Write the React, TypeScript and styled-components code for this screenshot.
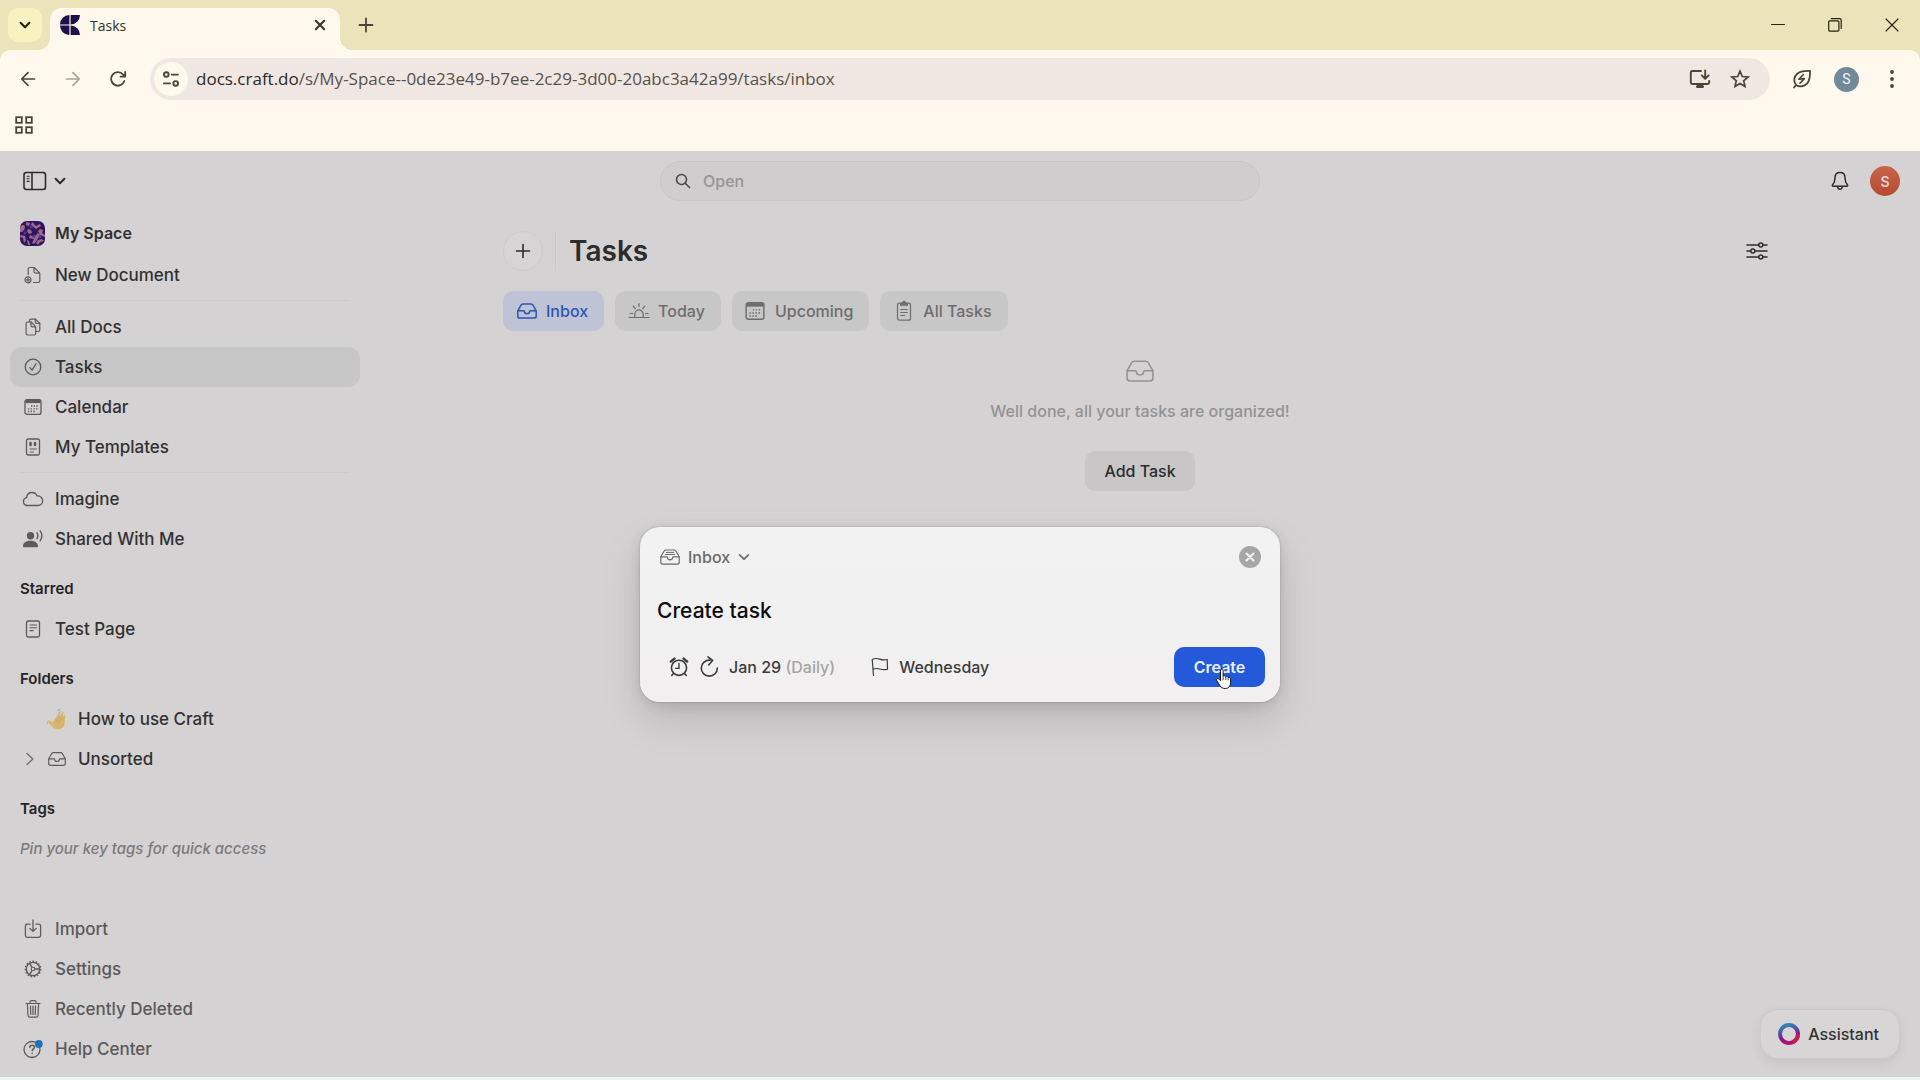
import React from "react";
import styled, { createGlobalStyle } from "styled-components";

const ui = `Inter, "Liberation Sans", sans-serif`;
const chromeFont = `"Open Sans", "Noto Sans", sans-serif`;

const Global = createGlobalStyle`
  * { box-sizing: border-box; }
  html, body { margin: 0; padding: 0; }
  body { font-family: ${ui}; background: #edf3f1; }
  button, input { font: inherit; color: inherit; border: 0; background: none; padding: 0; margin: 0; outline: none; }
  a { color: inherit; text-decoration: none; }
  svg { display: block; flex: none; }
`;

/* ---------- icons ---------- */

type IconProps = { w?: number; h?: number; sw?: number; children: React.ReactNode };
const Icon = ({ w = 20, h = 20, sw = 1.4, children }: IconProps) => (
  <svg width={w} height={h} viewBox={`0 0 ${w} ${h}`} fill="none" stroke="currentColor" strokeWidth={sw} strokeLinecap="round" strokeLinejoin="round" aria-hidden="true">
    {children}
  </svg>
);

const CraftLogo = () => (
  <svg width="20" height="20" viewBox="0 0 20 20" fill="#1f1147" aria-hidden="true">
    <path d="M9.4 0v9.4H0A9.4 9.4 0 0 1 9.4 0ZM9.4 20v-9.4H0A9.4 9.4 0 0 0 9.4 20ZM10.6 0H20a9.4 9.4 0 0 1-9.4 9.4ZM10.6 20H20a9.4 9.4 0 0 0-9.4-9.4Z" />
  </svg>
);
const ChevronDown = ({ w = 12, sw = 2 }: { w?: number; sw?: number }) => (
  <svg width={w} height={w} viewBox="0 0 12 12" fill="none" stroke="currentColor" strokeWidth={sw} strokeLinecap="round" strokeLinejoin="round" aria-hidden="true">
    <path d="M1.6 3.8 6 8.2l4.4-4.4" />
  </svg>
);
const ChevronRight = () => <Icon w={10} h={14} sw={1.3}><path d="m2 1.5 5.8 5.5L2 12.5" /></Icon>;
const Cross = () => <Icon w={12} h={12} sw={2}><path d="m1.8 1.8 8.4 8.4M10.2 1.8l-8.4 8.4" /></Icon>;
const Plus = ({ sw = 2 }: { sw?: number }) => <Icon w={16} h={16} sw={sw}><path d="M8 1.5v13M1.5 8h13" /></Icon>;
const Minimise = () => <Icon w={14} h={14} sw={1}><path d="M.5 6.5h13" /></Icon>;
const Restore = () => <Icon w={14} h={14} sw={1.2}><rect x=".7" y="2.9" width="10.2" height="10.2" rx="1" /><path d="M3.2.7h8.6a1.4 1.4 0 0 1 1.4 1.4v8.4" /></Icon>;
const CloseWindow = () => <Icon w={14} h={14} sw={1.1}><path d="m1 1 12 12M13 1 1 13" /></Icon>;
const Back = () => <Icon w={18} h={18} sw={1.7}><path d="M15.500 9H3M9 2.700 2.700 9 9 15.300" /></Icon>;
const Forward = () => <Icon w={18} h={18} sw={1.7}><path d="M2.500 9H15M9 2.700 15.300 9 9 15.300" /></Icon>;
const Reload = () => <Icon w={18} h={18} sw={1.8}><path d="M15.4 11A6.800 6.800 0 1 1 14 4.300L16 6.4M16.200 1.900v4.700h-4.700" /></Icon>;
const SiteSettings = () => <Icon w={18} h={18} sw={1.9}><circle cx="4.3" cy="4.6" r="2.3" /><path d="M9.8 4.6H16M2 13.4h6" /><circle cx="13.7" cy="13.4" r="2.3" /></Icon>;
const InstallApp = () => <Icon w={22} h={20} sw={1.9}><path d="M12 2H3.2A1.4 1.4 0 0 0 1.8 3.4v10.2A1.4 1.4 0 0 0 3.2 15h15.6a1.4 1.4 0 0 0 1.4-1.4V12M16.2 1.5v8M12.8 6.4l3.4 3.4 3.4-3.4" /><path d="M8.5 17.5h5" strokeWidth="3" /></Icon>;
const StarIcon = () => <Icon w={20} h={20} sw={1.7}><path d="m10 2.2 2.3 5.3 5.8.5-4.4 3.8 1.3 5.6-5-3-5 3 1.3-5.6L1.900 8l5.800-.5Z" strokeLinejoin="miter" /></Icon>;
const Leaf = () => <Icon w={20} h={20} sw={1.8}><path d="M2 18.500 4 16M4 16C1 12 2.200 7.500 5 5c3-2.700 8-3.200 13-3 .2 5-.2 9.600-3 12.600-2.800 2.800-7.400 3.800-11 1.400Z" /><path d="m11.500 5.500-4.700 4.700 5.600-.6-4.500 4.600" strokeWidth="1.600" /></Icon>;
const Dots = () => <svg width="6" height="20" viewBox="0 0 6 20" fill="currentColor" aria-hidden="true"><circle cx="3" cy="3" r="1.900" /><circle cx="3" cy="10" r="1.900" /><circle cx="3" cy="17" r="1.900" /></svg>;
const Apps = () => <Icon w={18} h={18} sw={1.800}><g strokeLinejoin="miter"><rect x="1.200" y="1.200" width="5.600" height="5.600" /><rect x="11.200" y="1.200" width="5.600" height="5.600" /><rect x="1.200" y="11.200" width="5.600" height="5.600" /><rect x="11.200" y="11.200" width="5.600" height="5.600" /></g></Icon>;

const Panel = () => <Icon w={24} h={20} sw={1.600}><rect x="1" y="1.500" width="21.500" height="17" rx="2.500" /><path d="M9 1.500v17" /><path d="M4 5.200h2.200M4 7.800h2.200M4 10.400h2.200" strokeWidth="1.100" /></Icon>;
const SearchIcon = () => <Icon w={16} h={16} sw={1.600}><circle cx="6.500" cy="6.500" r="5" /><path d="m10.300 10.300 4.200 4.200" /></Icon>;
const Bell = () => <Icon w={18} h={20} sw={1.500}><path d="M9 1.500c-3.200 0-5 2.300-5 5.200 0 4-1 5.600-2.400 7.100-.6.700-.2 1.500.6 1.500h13.600c.8 0 1.200-.8.600-1.500-1.400-1.500-2.400-3.100-2.400-7.100 0-2.900-1.800-5.200-5-5.200Z" /><path d="M6.700 15.500a2.300 2.700 0 0 0 4.600 0" /></Icon>;
const NewDoc = () => <Icon w={18} h={18} sw={1.200}><path d="M4.200 8.500V3.200c0-1 .6-1.700 1.700-1.700h4.300l5.600 5.600v7.700c0 1-.6 1.700-1.700 1.700H9.500M10 1.700v3.900c0 1 .6 1.500 1.500 1.500h4" /><circle cx="4" cy="13.800" r="3" /><path d="M2.500 13.800h3M4 12.300v3" /></Icon>;
const Docs = () => <Icon w={18} h={18} sw={1.200}><path d="M5.500 4V2.700c0-1 .6-1.600 1.500-1.600h4.500l4.300 4.300V12c0 .900-.6 1.500-1.500 1.500H12" /><path d="M11.300 1.200v2.900c0 .900.500 1.300 1.300 1.300h3" /><path d="M3.600 4h3.600l4.500 4.800V15.500c0 .900-.6 1.500-1.500 1.500H3.600c-.900 0-1.500-.6-1.500-1.500v-10C2.100 4.600 2.700 4 3.600 4Z" /><path d="M7 4.200v3.300c0 .900.500 1.400 1.300 1.400h3.200" /></Icon>;
const CheckCircle = () => <Icon w={18} h={18} sw={1.300}><circle cx="9" cy="9" r="7.800" /><path d="m5.900 9.600 2.200 2.600 4-6.500" /></Icon>;
const CalendarIcon = ({ w = 18 }: { w?: number }) => (
  <svg width={w} height={w} viewBox="0 0 18 18" fill="none" stroke="currentColor" strokeWidth="1.300" aria-hidden="true">
    <rect x="1" y="1.600" width="16" height="14.800" rx="2" /><path d="M1.500 3.500h15" strokeWidth="3.200" />
    <path d="M7 8h8M4 10.800h11M4 13.500h8" strokeWidth="1.300" strokeDasharray="1.300 1.400" />
  </svg>
);
const Template = () => <Icon w={18} h={18} sw={1.300}><rect x="2.500" y="1" width="13" height="16" rx="1.800" /><path d="M6.500 5v2M11 5v2" strokeWidth="2.600" /><path d="M6 11h6.500M6 14h3.500" strokeWidth="1.100" /></Icon>;
const Cloud = () => <Icon w={22} h={16} sw={1.300}><path d="M5.300 14.500a4 4 0 0 1-.7-7.900C4.900 3.500 7.200 1.500 10 1.500c2.400 0 4.300 1.300 5.100 3.500 3.100-.3 5.600 1.900 5.600 4.800 0 2.700-2 4.700-4.700 4.700Z" /></Icon>;
const Shared = () => <Icon w={20} h={18} sw={1.400}><g fill="currentColor" stroke="none"><circle cx="7.500" cy="5.800" r="3.700" /><path d="M0 16.500c0-3.700 3-5.800 7.500-5.800s7.500 2.100 7.500 5.800c0 .5-.3.700-.8.700H.8c-.5 0-.8-.2-.8-.7Z" /></g><path d="M14 2.900c1 1.600 1 4 0 5.700M17.200.9c2 2.900 2 7 0 10" /></Icon>;
const PageIcon = () => <Icon w={18} h={18} sw={1.300}><rect x="2.500" y="1" width="13" height="16" rx="1.800" /><path d="M6 5h6.500M6 7.800h6.500M6 10.600h3.200" strokeWidth="1.100" /></Icon>;
const InboxIcon = ({ w = 20, sw = 1.400, filled = false }: { w?: number; sw?: number; filled?: boolean }) => (
  <svg width={w} height={w} viewBox="0 0 20 20" fill="none" stroke="currentColor" strokeWidth={sw} strokeLinecap="round" strokeLinejoin="round" aria-hidden="true">
    <path d="M.8 9.800 4 4.200c.5-.8 1-1.200 2-1.200h8c1 0 1.500.4 2 1.200l3.200 5.600v5.400c0 1.200-.7 1.900-1.900 1.900H2.700c-1.200 0-1.900-.7-1.900-1.900Z" />
    <path d="M1 9.800h5.600c.6 0 .8.300.8.800 0 1.300 1.100 2.200 2.600 2.200s2.600-.9 2.600-2.200c0-.5.200-.8.800-.8H19" />
    {filled && <path d="M6.300 5.400h7.400M5.300 7.500h9.400" strokeWidth="1" />}
  </svg>
);
const ImportIcon = () => <Icon w={18} h={20} sw={1.300}><path d="M6 5.200H3.200A1.800 1.800 0 0 0 1.400 7v9.500c0 1 .8 1.800 1.800 1.800h11.600c1 0 1.800-.8 1.800-1.800V7c0-1-.8-1.800-1.800-1.800H12M9 1v11.300M5.800 9.400 9 12.400l3.200-3" /></Icon>;
const Gear = () => (
  <Icon w={18} h={18} sw={1.300}>
    <circle cx="9" cy="9" r="6.700" /><circle cx="9" cy="9" r="7.700" strokeWidth="1.400" strokeDasharray="1.600 1.625" strokeLinecap="butt" />
    <path d="M10.800 9h4.700M8 7.400 5.600 3.300M8 10.600l-2.400 4.100" /><circle cx="9" cy="9" r="1.800" strokeWidth="1.100" />
  </Icon>
);
const Trash = () => <Icon w={18} h={20} sw={1.200}><path d="M2 4.500h14M6 4.400V3c0-.800.600-1.400 1.400-1.400h3.200c.8 0 1.400.6 1.400 1.400v1.400M3.400 4.700l.6 11.800c.1 1 .8 1.600 1.700 1.600h6.600c.900 0 1.600-.6 1.700-1.600l.6-11.800M6.500 7l.3 8.500M9 7v8.500M11.500 7l-.3 8.500" /></Icon>;
const Help = () => (
  <Icon w={20} h={20} sw={1.300}>
    <circle cx="9" cy="10.500" r="8" />
    <path d="M6.800 8.400c0-1.300 1-2.200 2.300-2.200s2.300.8 2.300 2c0 1.700-2.200 1.800-2.200 3.500M9.200 14.400v.1" strokeWidth="1.500" />
    <circle cx="15.800" cy="5" r="3.900" fill="#2470b8" stroke="none" />
  </Icon>
);
const Hand = () => (
  <svg width="20" height="22" viewBox="0 0 22 24" aria-hidden="true">
    <path d="M8.500 22.500c-2-.9-5-4.400-7.600-7.500-.6-.9.3-1.800 1.300-1.300l4.200 2.100L12.500 6c.7-1.600 1.900-1 1.700.5L13.600 10l3-5.500c.8-1.100 2-.4 1.600 1L17 9.500l1.700-1.400c1.300-.6 1.800.5 1.300 1.800-.5 2.500 0 6-.9 9-1.100 4-6.800 5.200-10.600 3.600Z" fill="#d7b56c" />
    <path d="m10 15 4-6M12.500 16.500l4-6.500" stroke="#c39a48" strokeWidth=".8" />
    <path d="M11.500 3.500c.8-1.300 1.700-2 3-2.300M13 5.500c.6-1.200 1.300-1.800 2.200-2" fill="none" stroke="#929292" strokeWidth=".9" />
    <path d="M.5 14.500c-.4 1-.2 2 .5 3" fill="none" stroke="#a3a3a3" strokeWidth=".9" />
  </svg>
);
const Sunrise = () => <Icon w={22} h={20} sw={1.200}><path d="M1 16.500h20M2 12.500h2.500M17.500 12.500H20M6.800 16.300v-3.200a4.200 4.200 0 0 1 8.400 0v3.200M11 2.500v3M5.200 5.200l2 2.300M16.800 5.200l-2 2.300" /></Icon>;
const Clipboard = () => <Icon w={16} h={22} sw={1.200}><rect x="1.500" y="3.200" width="13" height="17" rx="2" /><path d="M4.500 5.200c0-1.200.8-2 2-2C6.700 2 7.200 1.200 8 1.200s1.300.8 1.500 2c1.200 0 2 .8 2 2Z" fill="currentColor" /><path d="M4.700 9.500h6.600M4.700 12.500h6.600M4.700 15.500h4" /></Icon>;
const Sliders = () => <Icon w={22} h={20} sw={1.500}><path d="M1 4h11.500M17 4h4M1 10h3.500M9 10h12M1 16h11.500M17 16h4" /><circle cx="14.800" cy="4" r="2" /><circle cx="6.800" cy="10" r="2" /><circle cx="14.800" cy="16" r="2" /></Icon>;
const Alarm = () => <Icon w={20} h={20} sw={1.600}><circle cx="10" cy="10.800" r="7.600" /><path d="M10 6.400v5H6.500" strokeWidth="1.400" /><path d="M1.800 4.600 5.400 1.600M18.200 4.600l-3.600-3" strokeWidth="2.400" /><path d="m4.500 16.500-1.800 2M15.500 16.500l1.800 2" /></Icon>;
const Repeat = () => <Icon w={20} h={22} sw={1.600}><path d="M11 4.200A8 8 0 1 0 18.300 12M9 .9l4.600 3.600L9.700 9" /></Icon>;
const Flag = () => <Icon w={18} h={20} sw={1.200}><path d="M2.500 18.500 1.200 2.500c3-1.600 5-1.200 7.300-.4 2.600.9 4.800 1.200 7.700.4l.3 9.700c-3 .9-5.200.600-7.700-.2-2.200-.700-4.200-.8-6.800.2" /></Icon>;
const Pointer = () => (
  <svg width="18" height="22" viewBox="0 0 18 22" aria-hidden="true">
    <path d="M5.500 2.200c0-1.600 2.600-1.600 2.600 0v5.600l1-.2c.9-.1 1.500.3 1.700 1 1-.4 2-.1 2.300.8 1.500-.4 2.500.4 2.500 1.700v3.700c0 3.300-2 5.700-5.200 5.700-2.900 0-4.400-1-5.700-3.200L1.500 12.200c-.7-1.400.9-2.500 2.100-1.400l1.900 1.800Z" fill="#fff" stroke="#15151c" strokeWidth="1" />
    <path d="M8.100 8v4M10.800 8.800V12M13.200 9.800v2.600" stroke="#15151c" strokeWidth=".8" />
  </svg>
);
const SpaceArt = () => (
  <svg width="25" height="25" viewBox="0 0 25 25" aria-hidden="true">
    <defs><clipPath id="space"><rect width="25" height="25" rx="7" /></clipPath></defs>
    <g clipPath="url(#space)">
      <rect width="25" height="25" fill="#301660" />
      <g fill="#a06a8c">
        <path d="M1 5c2-2 4-1 4 1s-1 3-3 5H0V7ZM6 1l4 1-1 3-3-1ZM12 1c2 1 2 3 4 4l4-2 1 2-5 3-5-4ZM20 8l3 1-1 3 3 2v2l-5-2-2-4ZM8 8l3 1 1 3-3 1-2-3ZM1 14l4 1 1 4-2 3-1-5-3-1ZM10 14l4 2 4-4 2 2-3 5-3 4-2-1 2-4-5-1ZM18 19l4-1 2 2-4 1-2 3-2-2ZM7 19l2 1 1 4H8Z" />
      </g>
      <g fill="#4436a8"><circle cx="11" cy="6" r="1.700" /><circle cx="14" cy="15" r="1.500" /><circle cx="5" cy="12" r="1.400" /><circle cx="20" cy="16" r="1.400" /></g>
    </g>
  </svg>
);
const AssistantRing = () => (
  <svg width="22" height="22" viewBox="0 0 22 22" fill="none" aria-hidden="true">
    <defs><linearGradient id="ring" x1=".3" y1="0" x2=".6" y2="1"><stop offset="0" stopColor="#3583ba" /><stop offset=".35" stopColor="#5552a0" /><stop offset=".65" stopColor="#8b168c" /><stop offset="1" stopColor="#b81468" /></linearGradient></defs>
    <circle cx="11" cy="11" r="9" stroke="url(#ring)" strokeWidth="4" />
    <path d="M20 11a9 9 0 0 1-5 8" stroke="#bd244d" strokeWidth="4" />
  </svg>
);

/* ---------- browser chrome ---------- */

const Page = styled.div`
  min-height: 100vh;
  display: flex;
  flex-direction: column;
  padding-bottom: 3px;
`;
const Chrome = styled.header`
  background: #ebe3b9;
  font-family: ${chromeFont};
  color: #4a4536;
`;
const TabStrip = styled.div`
  display: flex;
  height: 50px;
  padding: 8px 0 0 8px;
`;
const TabSearch = styled.button`
  display: grid;
  place-items: center;
  width: 34px;
  height: 34px;
  border-radius: 10px;
  background: #faf1c0;
  color: #28230f;
`;
const Tab = styled.div`
  position: relative;
  display: flex;
  align-items: center;
  width: 290px;
  margin-left: 8px;
  padding: 0 14px 8px 10px;
  border-radius: 12px 12px 0 0;
  background: #fff8ec;
  color: #333129;
  font-size: 14px;
  &::before, &::after {
    content: "";
    position: absolute;
    bottom: 0;
    width: 12px;
    height: 12px;
  }
  &::before { left: -12px; background: radial-gradient(circle at 0 0, transparent 12px, #fff8ec 12px); }
  &::after { right: -12px; background: radial-gradient(circle at 100% 0, transparent 12px, #fff8ec 12px); }
`;
const TabTitle = styled.span`
  flex: 1;
  margin-left: 10px;
`;
const PlainButton = styled.button<{ $w: number; $h?: number; $color?: string }>`
  display: grid;
  place-items: center;
  width: ${(p) => p.$w}px;
  height: ${(p) => p.$h ?? 34}px;
  color: ${(p) => p.$color ?? "inherit"};
`;
const NewTab = styled(PlainButton)`
  margin-left: 8px;
`;
const WindowControls = styled.div`
  display: flex;
  margin-left: auto;
  color: #28230f;
`;
const Toolbar = styled.div`
  display: flex;
  align-items: center;
  height: 58px;
  padding: 0 6px 0 5px;
  border-radius: 10px 10px 0 0;
  background: #fff8ec;
`;
const Address = styled.form`
  display: flex;
  align-items: center;
  flex: 1;
  height: 42px;
  margin: 0 9px 0 10px;
  padding: 0 10px 0 4px;
  border-radius: 21px;
  background: #f0e7e3;
`;
const SiteInfo = styled(PlainButton)`
  border-radius: 50%;
  background: #fff8ec;
`;
const AddressText = styled.label`
  display: flex;
  flex: 1;
  min-width: 0;
  margin-left: 8px;
  font-size: 17px;
  line-height: 24px;
`;
const AddressInput = styled.input`
  flex: 1;
  min-width: 0;
  color: #57514b;
`;
const Host = styled.span`
  color: #2b2926;
`;
const Profile = styled.span`
  display: grid;
  place-items: center;
  width: 25px;
  height: 25px;
  border-radius: 50%;
  background: #718a97;
  color: #f2f6f8;
  font: 14px Roboto, sans-serif;
`;
const Bookmarks = styled.div`
  display: flex;
  align-items: center;
  height: 43px;
  padding: 0 0 10px 7px;
  background: #fff8ec;
`;

/* ---------- app shell ---------- */

const Workspace = styled.div`
  position: relative;
  flex: 1;
  display: flex;
  flex-direction: column;
  background: #d4d2d3;
  color: #2d2c2d;
`;
const TopBar = styled.header`
  display: grid;
  grid-template-columns: 1fr minmax(200px, 600px) 1fr;
  align-items: center;
  height: 60px;
  padding: 0 20px;
`;
const PanelToggle = styled.button`
  display: flex;
  align-items: center;
  justify-self: start;
  gap: 7px;
  height: 40px;
  padding-left: 3px;
`;
const SearchBox = styled.label`
  display: flex;
  align-items: center;
  gap: 12px;
  height: 40px;
  padding: 0 14px;
  border: 1px solid #c8c6c7;
  border-radius: 20px;
  background: #cfcdce;
  color: #4a494a;
`;
const SearchInput = styled.input`
  flex: 1;
  min-width: 0;
  font-size: 16px;
  font-weight: 500;
  &::placeholder { color: #969596; opacity: 1; }
`;
const TopActions = styled.div`
  display: flex;
  align-items: center;
  justify-self: end;
  gap: 10px;
`;
const Avatar = styled.button`
  width: 30px;
  height: 30px;
  border-radius: 50%;
  background: linear-gradient(#c8644a, #b54a31);
  color: #e4d6d2;
  font-size: 14px;
  font-weight: 600;
`;
const Body = styled.div`
  flex: 1;
  display: flex;
`;
const Sidebar = styled.nav`
  display: flex;
  flex-direction: column;
  width: 360px;
  padding: 2px 0 8px 10px;
`;
const NavItem = styled.a<{ $active?: boolean; $muted?: boolean }>`
  display: flex;
  align-items: center;
  gap: 10px;
  height: 40px;
  padding: 0 10px;
  border-radius: 12px;
  background: ${(p) => (p.$active ? "#c7c6c6" : "transparent")};
  color: ${(p) => (p.$muted ? "#5a595a" : "#323132")};
  font-size: 17px;
  font-weight: 450;
`;
const SpaceItem = styled(NavItem)`
  margin-bottom: 2px;
  font-size: 16px;
  font-weight: 600;
`;
const IconSlot = styled.span`
  display: grid;
  place-items: center;
  width: 25px;
  color: #5c5b5c;
`;
const Disclosure = styled.span`
  width: 15px;
  padding-left: 5px;
  color: #6f6e6f;
`;
const FolderLink = styled(NavItem)`
  gap: 9px;
`;
const Divider = styled.hr`
  width: 330px;
  height: 1px;
  margin: 5px 0 6px 10px;
  border: 0;
  background: #cccacb;
`;
const SectionTitle = styled.h2`
  margin: 10px 0 0;
  padding-left: 10px;
  font-size: 15px;
  font-weight: 600;
  line-height: 40px;
  color: #252425;
`;
const Hint = styled.p`
  margin: 0;
  padding-left: 10px;
  font-size: 15px;
  font-style: italic;
  font-weight: 500;
  line-height: 40px;
  color: #7b7a7b;
`;
const Footer = styled.div`
  margin-top: auto;
`;

/* ---------- tasks ---------- */

const Main = styled.main`
  flex: 1;
  min-width: 0;
  padding: 20px 40px;
`;
const Content = styled.div`
  max-width: 1274px;
  margin: 0 auto;
`;
const TitleRow = styled.div`
  display: flex;
  align-items: center;
  height: 40px;
`;
const AddButton = styled.button`
  display: grid;
  place-items: center;
  width: 40px;
  height: 40px;
  border: 1px solid #cdcbcc;
  border-radius: 50%;
  background: #d6d4d5;
`;
const Separator = styled.span`
  width: 1px;
  height: 40px;
  margin: 0 13px 0 12px;
  background: #cac8c9;
`;
const Title = styled.h1`
  flex: 1;
  margin: 0;
  font-size: 28px;
  font-weight: 600;
  line-height: 40px;
`;
const Chips = styled.div`
  display: flex;
  gap: 11px;
  margin-top: 20px;
`;
const Chip = styled.button<{ $active?: boolean }>`
  display: flex;
  align-items: center;
  gap: 9px;
  height: 40px;
  padding: 0 16px 0 13px;
  border-radius: 10px;
  background: ${(p) => (p.$active ? "#bfc3d6" : "#c8c7c7")};
  color: ${(p) => (p.$active ? "#2c55b4" : "#6e6d6e")};
  font-size: 16px;
  font-weight: 500;
`;
const ChipIcon = styled.span`
  display: flex;
  justify-content: center;
  width: 21px;
`;
const Empty = styled.section`
  display: flex;
  flex-direction: column;
  align-items: center;
  padding-top: 26px;
  color: #939293;
`;
const EmptyText = styled.p`
  margin: 12px 0 0;
  font-size: 16px;
  font-weight: 500;
  line-height: 28px;
`;
const AddTask = styled.button`
  height: 40px;
  margin-top: 26px;
  padding: 0 19px;
  border-radius: 10px;
  background: #c8c6c7;
  color: #2d2c2d;
  font-size: 16px;
  font-weight: 500;
`;

/* ---------- floating layers ---------- */

const Layer = styled.div`
  position: absolute;
  inset: 0;
  display: flex;
  justify-content: center;
  align-items: flex-start;
  padding-top: 376px;
`;
const Dialog = styled.form`
  width: 640px;
  padding: 15px;
  border-radius: 20px;
  background: linear-gradient(#f2f2f2, #f1eff0);
  box-shadow: 0 0 2px rgba(0, 0, 0, 0.25), 0 18px 40px rgba(0, 0, 0, 0.13), 0 4px 14px rgba(0, 0, 0, 0.1);
`;
const DialogHead = styled.div`
  display: flex;
  align-items: center;
  justify-content: space-between;
  height: 30px;
  padding: 0 4px 0 5px;
`;
const Picker = styled.button`
  display: flex;
  align-items: center;
  gap: 8px;
  color: #6b6a6b;
  font-size: 16px;
  font-weight: 450;
`;
const CloseButton = styled.button`
  display: grid;
  place-items: center;
  width: 22px;
  height: 22px;
  border-radius: 50%;
  background: #a7a6a7;
  color: #f7f6f7;
`;
const TaskName = styled.input`
  display: block;
  width: 100%;
  height: 40px;
  margin: 18px 0 17px;
  padding: 0 2px;
  color: #0d0d0d;
  font-size: 21px;
  font-weight: 450;
`;
const DialogActions = styled.div`
  display: flex;
  align-items: center;
  height: 40px;
  padding-left: 14px;
  color: #3c3b3c;
  font-size: 16px;
  font-weight: 500;
`;
const Option = styled.button`
  display: flex;
  align-items: center;
  gap: 10px;
  margin-right: 36px;
  white-space: nowrap;
`;
const Faint = styled.span`
  color: #a5a4a5;
`;
const CreateButton = styled.button`
  position: relative;
  width: 91px;
  height: 40px;
  margin-left: auto;
  border-radius: 10px;
  background: #245ad9;
  color: #e9f1ff;
  font-weight: 600;
`;
const CursorMark = styled.span`
  position: absolute;
  left: 41px;
  top: 21px;
`;
const Assistant = styled.button`
  position: absolute;
  right: 20px;
  bottom: 18px;
  display: flex;
  align-items: center;
  gap: 8px;
  height: 50px;
  padding: 0 20px 0 17px;
  border: 1px solid #cbc9ca;
  border-radius: 18px;
  background: #d7d5d6;
  box-shadow: 0 4px 12px rgba(0, 0, 0, 0.08);
  color: #343334;
  font-size: 16px;
  font-weight: 500;
`;

type Entry = { label: string; icon: React.ReactNode; active?: boolean; muted?: boolean };
const NavList = ({ items }: { items: Entry[] }) => (
  <>
    {items.map((it) => (
      <NavItem key={it.label} href="#" $active={it.active} $muted={it.muted}>
        <IconSlot>{it.icon}</IconSlot>
        {it.label}
      </NavItem>
    ))}
  </>
);

const library: Entry[] = [
  { label: "All Docs", icon: <Docs /> },
  { label: "Tasks", icon: <CheckCircle />, active: true },
  { label: "Calendar", icon: <CalendarIcon /> },
  { label: "My Templates", icon: <Template /> },
];
const shared: Entry[] = [
  { label: "Imagine", icon: <Cloud /> },
  { label: "Shared With Me", icon: <Shared /> },
];
const footer: Entry[] = [
  { label: "Import", icon: <ImportIcon />, muted: true },
  { label: "Settings", icon: <Gear />, muted: true },
  { label: "Recently Deleted", icon: <Trash />, muted: true },
  { label: "Help Center", icon: <Help />, muted: true },
];
const filters: Entry[] = [
  { label: "Inbox", icon: <InboxIcon sw={1.500} />, active: true },
  { label: "Today", icon: <Sunrise /> },
  { label: "Upcoming", icon: <CalendarIcon w={20} /> },
  { label: "All Tasks", icon: <Clipboard /> },
];

export default function App() {
  return (
    <Page>
      <Global />
      <Chrome>
        <TabStrip>
          <TabSearch aria-label="Search tabs"><ChevronDown sw={2.200} /></TabSearch>
          <Tab>
            <CraftLogo />
            <TabTitle>Tasks</TabTitle>
            <PlainButton $w={12} aria-label="Close tab"><Cross /></PlainButton>
          </Tab>
          <NewTab $w={36} aria-label="New tab"><Plus sw={1.800} /></NewTab>
          <WindowControls>
            <PlainButton $w={57} aria-label="Minimise"><Minimise /></PlainButton>
            <PlainButton $w={57} aria-label="Restore"><Restore /></PlainButton>
            <PlainButton $w={57} aria-label="Close"><CloseWindow /></PlainButton>
          </WindowControls>
        </TabStrip>
        <Toolbar>
          <PlainButton $w={45} aria-label="Back"><Back /></PlainButton>
          <PlainButton $w={45} $color="#aaa395" aria-label="Forward"><Forward /></PlainButton>
          <PlainButton $w={45} aria-label="Reload"><Reload /></PlainButton>
          <Address>
            <SiteInfo type="button" $w={34} aria-label="Site information"><SiteSettings /></SiteInfo>
            <AddressText>
              <Host>docs.craft.do</Host>
              <AddressInput aria-label="Address" defaultValue="/s/My-Space--0de23e49-b7ee-2c29-3d00-20abc3a42a99/tasks/inbox" />
            </AddressText>
            <PlainButton type="button" $w={40} aria-label="Install app"><InstallApp /></PlainButton>
            <PlainButton type="button" $w={40} aria-label="Bookmark"><StarIcon /></PlainButton>
          </Address>
          <PlainButton $w={45} aria-label="Energy saver"><Leaf /></PlainButton>
          <PlainButton $w={45} aria-label="Profile"><Profile>S</Profile></PlainButton>
          <PlainButton $w={45} aria-label="Menu"><Dots /></PlainButton>
        </Toolbar>
        <Bookmarks>
          <PlainButton $w={34} $h={33} aria-label="Apps"><Apps /></PlainButton>
        </Bookmarks>
      </Chrome>

      <Workspace>
        <TopBar>
          <PanelToggle aria-label="Toggle sidebar"><Panel /><ChevronDown /></PanelToggle>
          <SearchBox><SearchIcon /><SearchInput aria-label="Open" placeholder="Open" /></SearchBox>
          <TopActions>
            <PlainButton $w={40} aria-label="Notifications"><Bell /></PlainButton>
            <Avatar aria-label="Account">S</Avatar>
          </TopActions>
        </TopBar>

        <Body>
          <Sidebar>
            <SpaceItem href="#"><SpaceArt />My Space</SpaceItem>
            <NavList items={[{ label: "New Document", icon: <NewDoc /> }]} />
            <Divider />
            <NavList items={library} />
            <Divider />
            <NavList items={shared} />
            <SectionTitle>Starred</SectionTitle>
            <NavList items={[{ label: "Test Page", icon: <PageIcon /> }]} />
            <SectionTitle>Folders</SectionTitle>
            <FolderLink href="#"><Disclosure /><IconSlot><Hand /></IconSlot>How to use Craft</FolderLink>
            <FolderLink href="#"><Disclosure><ChevronRight /></Disclosure><IconSlot><InboxIcon w={18} sw={1.300} /></IconSlot>Unsorted</FolderLink>
            <SectionTitle>Tags</SectionTitle>
            <Hint>Pin your key tags for quick access</Hint>
            <Footer><NavList items={footer} /></Footer>
          </Sidebar>

          <Main>
            <Content>
              <TitleRow>
                <AddButton aria-label="Add"><Plus sw={1.600} /></AddButton>
                <Separator />
                <Title>Tasks</Title>
                <PlainButton $w={40} aria-label="View options"><Sliders /></PlainButton>
              </TitleRow>
              <Chips>
                {filters.map((f) => (
                  <Chip key={f.label} $active={f.active}><ChipIcon>{f.icon}</ChipIcon>{f.label}</Chip>
                ))}
              </Chips>
              <Empty>
                <InboxIcon w={28} sw={1.100} />
                <EmptyText>Well done, all your tasks are organized!</EmptyText>
                <AddTask>Add Task</AddTask>
              </Empty>
            </Content>
          </Main>
        </Body>

        <Assistant><AssistantRing />Assistant</Assistant>

        <Layer>
          <Dialog role="dialog" aria-label="Create task">
            <DialogHead>
              <Picker type="button"><InboxIcon sw={1.200} filled />Inbox<ChevronDown sw={1.700} /></Picker>
              <CloseButton type="button" aria-label="Close"><Icon w={10} h={10} sw={2}><path d="m1.500 1.500 7 7M8.500 1.500l-7 7" /></Icon></CloseButton>
            </DialogHead>
            <TaskName aria-label="Task name" defaultValue="Create task" />
            <DialogActions>
              <Option type="button"><Alarm /><Repeat /><span>Jan 29 <Faint>(Daily)</Faint></span></Option>
              <Option type="button"><Flag />Wednesday</Option>
              <CreateButton type="button">Create<CursorMark><Pointer /></CursorMark></CreateButton>
            </DialogActions>
          </Dialog>
        </Layer>
      </Workspace>
    </Page>
  );
}
